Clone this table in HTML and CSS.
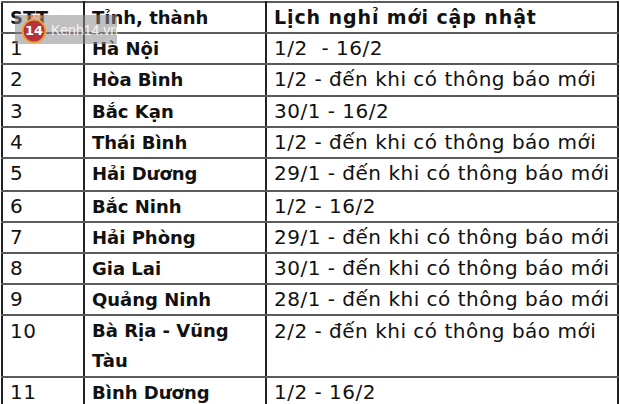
FILE: index.html
```html
<!DOCTYPE html>
<html lang="vi">
<head>
<meta charset="utf-8">
<link rel="stylesheet" href="styles.css">
</head>
<body>
<div class="wrap">
<table class="grid">
  <colgroup><col class="c1"><col class="c2"><col class="c3"></colgroup>
  <tr class="h31 head"><th>STT</th><th>Tỉnh, thành</th><th class="h3">Lịch nghỉ mới cập nhật</th></tr>
  <tr class="h31"><td>1</td><td class="prov">Hà Nội</td><td>1/2&nbsp; - 16/2</td></tr>
  <tr class="h32"><td>2</td><td class="prov">Hòa Bình</td><td>1/2 - đến khi có thông báo mới</td></tr>
  <tr class="h30"><td>3</td><td class="prov">Bắc Kạn</td><td>30/1 - 16/2</td></tr>
  <tr class="h30"><td>4</td><td class="prov">Thái Bình</td><td>1/2 - đến khi có thông báo mới</td></tr>
  <tr class="h33"><td>5</td><td class="prov">Hải Dương</td><td>29/1 - đến khi có thông báo mới</td></tr>
  <tr class="h31"><td>6</td><td class="prov">Bắc Ninh</td><td>1/2 - 16/2</td></tr>
  <tr class="h31"><td>7</td><td class="prov">Hải Phòng</td><td>29/1 - đến khi có thông báo mới</td></tr>
  <tr class="h30"><td>8</td><td class="prov">Gia Lai</td><td>30/1 - đến khi có thông báo mới</td></tr>
  <tr class="h31"><td>9</td><td class="prov">Quảng Ninh</td><td>28/1 - đến khi có thông báo mới</td></tr>
  <tr class="h61"><td>10</td><td class="prov wrapc">Bà Rịa - Vũng Tàu</td><td>2/2 - đến khi có thông báo mới</td></tr>
  <tr class="h30"><td>11</td><td class="prov">Bình Dương</td><td>1/2 - 16/2</td></tr>
</table>
<div class="mark">
  <svg class="logo" width="28" height="30" viewBox="0 0 28 30">
    <circle cx="7" cy="3" r="1.6" fill="#f3a23a"/>
    <circle cx="11.5" cy="2" r="1.6" fill="#e96a3a"/>
    <circle cx="16.5" cy="2" r="1.6" fill="#f3a23a"/>
    <circle cx="21" cy="3" r="1.6" fill="#e96a3a"/>
    <circle cx="14" cy="17" r="11.5" fill="#b8323a" stroke="#e9a23c" stroke-width="2"/>
  </svg>
  <span class="num">14</span>
  <span class="site">Kenh14.vn</span>
</div>
</div>
</body>
</html>
```
FILE: styles.css
```css
html, body { margin: 0; padding: 0; background: #fff; }
.wrap { position: relative; width: 620px; height: 404px; overflow: hidden; }
.grid {
  border-collapse: collapse;
  margin: 1px 0 0 1px;
  width: 618px;
  table-layout: fixed;
  font-family: "DejaVu Sans", sans-serif;
  font-size: 20px;
  letter-spacing: 0.5px;
  color: #111;
}
.c1 { width: 82px; }
.c2 { width: 182px; }
.grid th, .grid td {
  border: 2px solid #5a5a5a;
  border-left-color: #222;
  border-right-color: #222;
  padding: 0 0 0 7px;
  vertical-align: top;
  text-align: left;
  line-height: 29px;
  font-weight: normal;
  white-space: nowrap;
}
.head th { font-weight: bold; font-size: 18px; letter-spacing: 0; }
.head th.h3 { font-size: 19px; letter-spacing: 0.9px; }
.grid td.prov { font-weight: bold; font-size: 18px; letter-spacing: 0; }
.grid td.wrapc { white-space: normal; }
.h30 { height: 30px; }
.h31 { height: 31px; }
.h32 { height: 32px; }
.h33 { height: 33px; }
.h61 { height: 61px; }
.h61 td { line-height: 30px; }
.mark {
  position: absolute;
  left: 15px; top: 15px;
  width: 102px; height: 29px;
  background: rgba(140,140,140,0.55);
  display: flex; align-items: center;
}
.logo { position: absolute; left: 5px; top: -1px; }
.num {
  position: absolute; left: 5px; top: 8px;
  width: 28px; text-align: center;
  font-family: "DejaVu Sans", sans-serif; font-weight: bold; font-size: 13px; color: #fff;
}
.site {
  margin-left: 36px;
  font-family: "Liberation Sans", sans-serif; font-size: 14px; color: rgba(255,255,255,0.85);
}
```
